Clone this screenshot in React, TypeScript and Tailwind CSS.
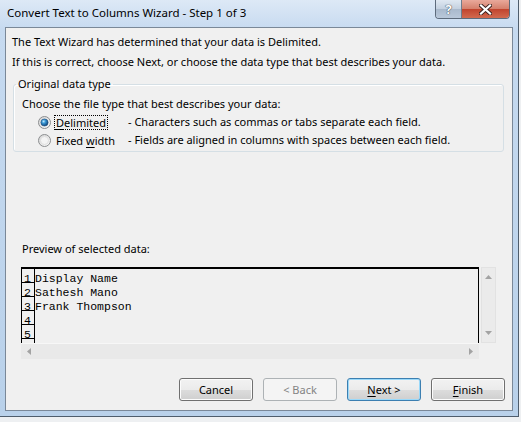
import React from "react";

const ui = "font-['Noto_Sans',sans-serif]";
const mono = "font-['Liberation_Mono',monospace]";

const Radio: React.FC<{ checked?: boolean; id: string }> = ({ checked, id }) => (
  <svg width="13" height="13" viewBox="0 0 13 13" className="shrink-0">
    <defs>
      <linearGradient id={`${id}-ring`} x1="0" y1="0" x2="1" y2="1">
        <stop offset="0" stopColor="#d2d2d2" />
        <stop offset="1" stopColor="#fdfdfd" />
      </linearGradient>
      <radialGradient id={`${id}-dot`} cx="0.38" cy="0.35" r="0.7">
        <stop offset="0" stopColor="#c6ecfc" />
        <stop offset="0.35" stopColor="#3a9ad8" />
        <stop offset="1" stopColor="#0d3c70" />
      </radialGradient>
    </defs>
    <circle cx="6.5" cy="6.5" r="6" fill={`url(#${id}-ring)`} stroke="#8c8e90" strokeWidth="1" />
    {checked ? (
      <circle cx="6.5" cy="6.5" r="3.6" fill={`url(#${id}-dot)`} stroke="#1d4f80" strokeWidth="0.6" />
    ) : (
      <circle cx="6.5" cy="6.5" r="4" fill="#f4f4f4" stroke="#dadada" strokeWidth="0.8" />
    )}
  </svg>
);

const Button: React.FC<{ kind?: "normal" | "default" | "disabled"; children: React.ReactNode }> = ({
  kind = "normal",
  children,
}) => {
  const base = "w-[74px] h-[23px] rounded-[3px] border flex items-center justify-center text-[11px]";
  if (kind === "disabled")
    return <div className={`${base} border-[#adb2b5] bg-[#f4f4f4] text-[#838383]`}>{children}</div>;
  if (kind === "default")
    return (
      <div
        className={`${base} border-[#3c7fb1] text-black bg-[linear-gradient(#f2f2f2_0%,#ebebeb_50%,#dddddd_50%,#cfcfcf_100%)] shadow-[inset_0_0_0_1px_#9ad9fa]`}
      >
        {children}
      </div>
    );
  return (
    <div
      className={`${base} border-[#707070] text-black bg-[linear-gradient(#f2f2f2_0%,#ebebeb_50%,#dddddd_50%,#cfcfcf_100%)] shadow-[inset_0_0_0_1px_#fcfcfc]`}
    >
      {children}
    </div>
  );
};

const Arrow: React.FC<{ dir: "up" | "down" | "left" | "right" }> = ({ dir }) => {
  const pts = {
    up: "0,4 3.5,0 7,4",
    down: "0,0 3.5,4 7,0",
    left: "4,0 0,3.5 4,7",
    right: "0,0 4,3.5 0,7",
  }[dir];
  const vertical = dir === "up" || dir === "down";
  return (
    <svg width={vertical ? 7 : 4} height={vertical ? 4 : 7} viewBox={vertical ? "0 0 7 4" : "0 0 4 7"}>
      <polygon points={pts} fill="#a3a3a3" />
    </svg>
  );
};

const rows = ["Display Name", "Sathesh Mano", "Frank Thompson", "", "", ""];

export default function App() {
  return (
    <div className={`w-[521px] h-[422px] bg-[#eef0f2] overflow-hidden ${ui}`}>
      <div className="w-[519px] h-[417px] flex flex-col bg-[linear-gradient(#dde9f6_0px,#c6daf0_30px,#b9d1ea_100%)] border-r border-b border-[#4f5d6c]">
        {/* Title bar */}
        <div className="h-[27px] flex justify-between pl-[7px] pr-[8px]">
          <div className="pt-[4px] text-[11.5px] leading-[18px] text-black">
            Convert Text to Columns Wizard - Step 1 of 3
          </div>
          <div className="flex h-[19px] rounded-b-[4px] border border-t-0 border-[#5d6b7c] overflow-hidden">
            <div className="w-[26px] flex items-center justify-center bg-[linear-gradient(#dfe8f2,#c3d0df_50%,#a9b9cc_51%,#b9c8da)] border-r border-[#6f7c8c] text-white text-[13px] font-bold leading-none [text-shadow:0_0_1px_#2c3a4a,0_0_1px_#2c3a4a]">
              ?
            </div>
            <div className="w-[47px] flex items-center justify-center bg-[linear-gradient(#e9a99b,#d47f6b_50%,#c1442e_51%,#d26a4f)]">
              <svg width="13" height="11" viewBox="0 0 13 11">
                <path d="M2 1.5 L11 9.5 M11 1.5 L2 9.5" stroke="#3b2320" strokeWidth="4" strokeLinecap="square" />
                <path d="M2 1.5 L11 9.5 M11 1.5 L2 9.5" stroke="#ffffff" strokeWidth="2.2" strokeLinecap="square" />
              </svg>
            </div>
          </div>
        </div>

        {/* Client area */}
        <div className="ml-[5px] w-[508px] h-[384px] border border-[#7a8898] bg-[#f0f0f0] flex flex-col text-[11px] leading-[16px] text-black">
          <div className="pl-[6px] pt-[6px]">The Text Wizard has determined that your data is Delimited.</div>
          <div className="pl-[6px] mt-[4px]">
            If this is correct, choose Next, or choose the data type that best describes your data.
          </div>

          <fieldset className="ml-[7px] mt-[6px] w-[491px] border border-[#d5dfe5] rounded-[3px] shadow-[inset_1px_1px_0_#ffffff] pb-[2px]">
            <legend className="ml-[2px] px-[2px] leading-[16px]">Original data type</legend>
            <div className="pl-[8px] pt-[4px] leading-[16px]">Choose the file type that best describes your data:</div>
            <div className="mt-[1px] pl-[24px] flex flex-col">
              <div className="h-[18px] flex items-center">
                <Radio checked id="r1" />
                <div className="ml-[3px] w-[74px] flex">
                  <span className="h-[15px] leading-[13px] px-[1px] border border-dotted border-black">
                    <span className="underline underline-offset-2">D</span>elimited
                  </span>
                </div>
                <span>- Characters such as commas or tabs separate each field.</span>
              </div>
              <div className="h-[18px] flex items-center">
                <Radio id="r2" />
                <div className="ml-[3px] w-[74px] flex">
                  <span className="h-[15px] leading-[13px] px-[1px] border border-transparent">
                    Fixed <span className="underline underline-offset-2">w</span>idth
                  </span>
                </div>
                <span>- Fields are aligned in columns with spaces between each field.</span>
              </div>
            </div>
          </fieldset>

          <div className="pl-[16px] mt-[89px]">Preview of selected data:</div>

          {/* Preview box */}
          <div className="ml-[15px] mt-[10px] flex w-[475px] h-[92px]">
            <div className="w-[458px] flex flex-col">
              <div className={`h-[76px] border-t-2 border-l border-r border-black flex overflow-hidden ${mono} text-[11.5px]`}>
                <div className="w-[13px] border-r border-black flex flex-col shrink-0">
                  {rows.map((_, i) => (
                    <div key={i} className="h-[14px] shrink-0 border-b border-black pl-[2px] pt-[6px] leading-[7px]">
                      {i < 5 ? i + 1 : ""}
                    </div>
                  ))}
                </div>
                <div className="flex flex-col">
                  {rows.map((r, i) => (
                    <div key={i} className="h-[14px] shrink-0 whitespace-pre pt-[6px] leading-[7px]">
                      {r}
                    </div>
                  ))}
                </div>
              </div>
              <div className="h-[16px] bg-[#e9e9e9] border-t border-[#f7f7f7] flex items-center justify-between px-[6px]">
                <Arrow dir="left" />
                <Arrow dir="right" />
              </div>
            </div>
            <div className="ml-[2px] w-[15px] h-[76px] bg-[#ebebeb] border border-[#e2e2e2] flex flex-col items-center justify-between py-[7px]">
              <Arrow dir="up" />
              <Arrow dir="down" />
            </div>
          </div>

          {/* Buttons */}
          <div className="mt-[19px] flex justify-end gap-[10px] pr-[7px]">
            <Button>Cancel</Button>
            <Button kind="disabled">&lt; Back</Button>
            <Button kind="default">
              <span>
                <span className="underline underline-offset-2">N</span>ext &gt;
              </span>
            </Button>
            <Button>
              <span>
                <span className="underline underline-offset-2">F</span>inish
              </span>
            </Button>
          </div>
        </div>
      </div>
    </div>
  );
}
